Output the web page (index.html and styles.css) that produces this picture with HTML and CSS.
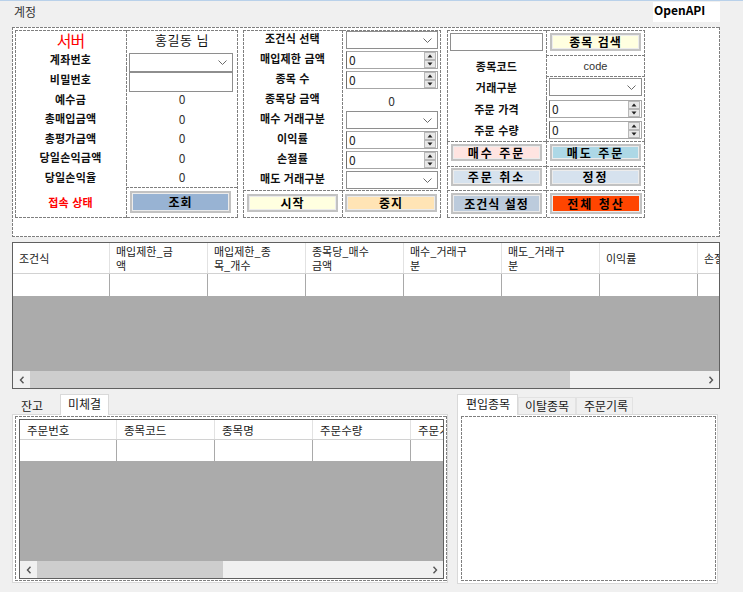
FILE: index.html
```html
<!DOCTYPE html>
<html lang="ko">
<head>
<meta charset="utf-8">
<title>OpenAPI</title>
<link rel="stylesheet" href="styles.css">
</head>
<body>
<div class="tabbar">
  <span class="tab-acct">계정</span>
  <span class="tab-api">OpenAPI</span>
</div>

<div class="top dbox">
  <!-- panel A -->
  <div class="pa dbox">
    <div class="lab server">서버</div>
    <div class="cell dl val name">홍길동 님</div>
    <div class="lab">계좌번호</div>
    <div class="cell dl a-ctl"><div class="combo wa"><svg class="chev" width="9" height="5" viewBox="0 0 9 5"><path d="M.5.5l4 4 4-4" fill="none" stroke="#6a6a6a"/></svg></div></div>
    <div class="lab">비밀번호</div>
    <div class="cell dl a-ctl"><div class="tbox wa"></div></div>
    <div class="lab">예수금</div><div class="cell dl val">0</div>
    <div class="lab">총매입금액</div><div class="cell dl val">0</div>
    <div class="lab">총평가금액</div><div class="cell dl val">0</div>
    <div class="lab">당일손익금액</div><div class="cell dl val">0</div>
    <div class="lab">당일손익율</div><div class="cell dl val">0</div>
    <div class="lab red">접속 상태</div>
    <div class="cell dlt bc"><button class="btn b-query">조회</button></div>
  </div>

  <!-- panel B -->
  <div class="pb dbox">
    <div class="lab">조건식 선택</div>
    <div class="cell dl pl4"><div class="combo wb"><svg class="chev" width="9" height="5" viewBox="0 0 9 5"><path d="M.5.5l4 4 4-4" fill="none" stroke="#6a6a6a"/></svg></div></div>
    <div class="lab">매입제한 금액</div>
    <div class="cell dl pl4"><div class="nud wb"><span>0</span><svg class="ud" width="12" height="16" viewBox="0 0 12 16"><rect x=".5" y=".5" width="11" height="7" fill="#e8e8e8" stroke="#b8b8b8"/><rect x=".5" y="8.5" width="11" height="7" fill="#e8e8e8" stroke="#b8b8b8"/><path d="M3.5 5.5h5L6 2.5z" fill="#222"/><path d="M3.5 10.5h5L6 13.5z" fill="#222"/></svg></div></div>
    <div class="lab">종목 수</div>
    <div class="cell dl pl4"><div class="nud wb"><span>0</span><svg class="ud" width="12" height="16" viewBox="0 0 12 16"><rect x=".5" y=".5" width="11" height="7" fill="#e8e8e8" stroke="#b8b8b8"/><rect x=".5" y="8.5" width="11" height="7" fill="#e8e8e8" stroke="#b8b8b8"/><path d="M3.5 5.5h5L6 2.5z" fill="#222"/><path d="M3.5 10.5h5L6 13.5z" fill="#222"/></svg></div></div>
    <div class="lab">종목당 금액</div>
    <div class="cell dl val">0</div>
    <div class="lab">매수 거래구분</div>
    <div class="cell dl pl4"><div class="combo wb"><svg class="chev" width="9" height="5" viewBox="0 0 9 5"><path d="M.5.5l4 4 4-4" fill="none" stroke="#6a6a6a"/></svg></div></div>
    <div class="lab">이익률</div>
    <div class="cell dl pl4"><div class="nud wb"><span>0</span><svg class="ud" width="12" height="16" viewBox="0 0 12 16"><rect x=".5" y=".5" width="11" height="7" fill="#e8e8e8" stroke="#b8b8b8"/><rect x=".5" y="8.5" width="11" height="7" fill="#e8e8e8" stroke="#b8b8b8"/><path d="M3.5 5.5h5L6 2.5z" fill="#222"/><path d="M3.5 10.5h5L6 13.5z" fill="#222"/></svg></div></div>
    <div class="lab">손절률</div>
    <div class="cell dl pl4"><div class="nud wb"><span>0</span><svg class="ud" width="12" height="16" viewBox="0 0 12 16"><rect x=".5" y=".5" width="11" height="7" fill="#e8e8e8" stroke="#b8b8b8"/><rect x=".5" y="8.5" width="11" height="7" fill="#e8e8e8" stroke="#b8b8b8"/><path d="M3.5 5.5h5L6 2.5z" fill="#222"/><path d="M3.5 10.5h5L6 13.5z" fill="#222"/></svg></div></div>
    <div class="lab">매도 거래구분</div>
    <div class="cell dl pl4"><div class="combo wb"><svg class="chev" width="9" height="5" viewBox="0 0 9 5"><path d="M.5.5l4 4 4-4" fill="none" stroke="#6a6a6a"/></svg></div></div>
    <div class="cell dt bb"><button class="btn b-start">시작</button></div>
    <div class="cell dlt bb2"><button class="btn b-stop">중지</button></div>
  </div>

  <!-- panel C -->
  <div class="pc dbox">
    <div class="cell c1"><div class="tbox wc"></div></div>
    <div class="cell dl c2"><button class="btn b-search">종목 검색</button></div>
    <div class="lab">종목코드</div>
    <div class="cell dlt val code">code</div>
    <div class="lab">거래구분</div>
    <div class="cell dlt pl3"><div class="combo wc"><svg class="chev" width="9" height="5" viewBox="0 0 9 5"><path d="M.5.5l4 4 4-4" fill="none" stroke="#6a6a6a"/></svg></div></div>
    <div class="lab">주문 가격</div>
    <div class="cell dl pl3"><div class="nud wc"><span>0</span><svg class="ud" width="12" height="16" viewBox="0 0 12 16"><rect x=".5" y=".5" width="11" height="7" fill="#e8e8e8" stroke="#b8b8b8"/><rect x=".5" y="8.5" width="11" height="7" fill="#e8e8e8" stroke="#b8b8b8"/><path d="M3.5 5.5h5L6 2.5z" fill="#222"/><path d="M3.5 10.5h5L6 13.5z" fill="#222"/></svg></div></div>
    <div class="lab">주문 수량</div>
    <div class="cell dl pl3"><div class="nud wc"><span>0</span><svg class="ud" width="12" height="16" viewBox="0 0 12 16"><rect x=".5" y=".5" width="11" height="7" fill="#e8e8e8" stroke="#b8b8b8"/><rect x=".5" y="8.5" width="11" height="7" fill="#e8e8e8" stroke="#b8b8b8"/><path d="M3.5 5.5h5L6 2.5z" fill="#222"/><path d="M3.5 10.5h5L6 13.5z" fill="#222"/></svg></div></div>
    <div class="cell dt r6"><button class="btn b-buy">매수 주문</button></div>
    <div class="cell dlt r6"><button class="btn b-sell">매도 주문</button></div>
    <div class="cell dt r7"><button class="btn b-cancel">주문 취소</button></div>
    <div class="cell dlt r7"><button class="btn b-cancel">정정</button></div>
    <div class="cell dt r8"><button class="btn b-cond">조건식 설정</button></div>
    <div class="cell dlt r8"><button class="btn b-clear">전체 청산</button></div>
  </div>
</div>

<div class="grid g1">
  <div class="ghead h1">
    <div class="gh">조건식</div>
    <div class="gh">매입제한_금<br>액</div>
    <div class="gh">매입제한_종<br>목_개수</div>
    <div class="gh">종목당_매수<br>금액</div>
    <div class="gh">매수_거래구<br>분</div>
    <div class="gh">매도_거래구<br>분</div>
    <div class="gh">이익률</div>
    <div class="gh">손절률</div>
  </div>
  <div class="grow r1">
    <div class="gc"></div><div class="gc"></div><div class="gc"></div><div class="gc"></div>
    <div class="gc"></div><div class="gc"></div><div class="gc"></div><div class="gc"></div>
  </div>
  <div class="gbody"></div>
  <div class="hscroll">
    <span class="arr"><svg width="6" height="8" viewBox="0 0 6 8"><path d="M4.5 .8L1.5 4l3 3.2" fill="none" stroke="#555" stroke-width="1.4"/></svg></span>
    <div class="track"><div class="thumb t1"></div></div>
    <span class="arr"><svg width="6" height="8" viewBox="0 0 6 8"><path d="M1.5 .8L4.5 4l-3 3.2" fill="none" stroke="#555" stroke-width="1.4"/></svg></span>
  </div>
</div>

<div class="lower">
  <div class="tabctl tl">
    <div class="tabs">
      <span class="tab t-jango">잔고</span>
      <span class="tab sel t-mi">미체결</span>
    </div>
    <div class="page pl">
      <div class="inner dbox il">
        <div class="grid g2">
          <div class="ghead h2">
            <div class="gh">주문번호</div>
            <div class="gh">종목코드</div>
            <div class="gh">종목명</div>
            <div class="gh">주문수량</div>
            <div class="gh">주문가격</div>
          </div>
          <div class="grow r2">
            <div class="gc"></div><div class="gc"></div><div class="gc"></div><div class="gc"></div><div class="gc"></div>
          </div>
          <div class="gbody"></div>
          <div class="hscroll">
            <span class="arr"><svg width="6" height="8" viewBox="0 0 6 8"><path d="M4.5 .8L1.5 4l3 3.2" fill="none" stroke="#555" stroke-width="1.4"/></svg></span>
            <div class="track"><div class="thumb t2"></div></div>
            <span class="arr"><svg width="6" height="8" viewBox="0 0 6 8"><path d="M1.5 .8L4.5 4l-3 3.2" fill="none" stroke="#555" stroke-width="1.4"/></svg></span>
          </div>
        </div>
      </div>
    </div>
  </div>

  <div class="tabctl tr">
    <div class="tabs">
      <span class="tab sel t-in">편입종목</span>
      <span class="tab t-out">이탈종목</span>
      <span class="tab t-log">주문기록</span>
    </div>
    <div class="page pr">
      <div class="inner dbox ir"></div>
    </div>
  </div>
</div>
</body>
</html>
```

FILE: styles.css
```css
:root {
  --dc: #7f7f7f;
  --dh: repeating-linear-gradient(90deg, var(--dc) 0 3px, transparent 3px 4px);
  --dv: repeating-linear-gradient(180deg, var(--dc) 0 3px, transparent 3px 4px);
}

* { box-sizing: border-box; }

html, body { margin: 0; padding: 0; }

body {
  width: 743px;
  height: 592px;
  overflow: hidden;
  background: #f0f0f0;
  font-family: "Noto Sans CJK KR", "Noto Sans", sans-serif;
  color: #000;
}

/* dashed helpers */
.dbox {
  background-image: var(--dh), var(--dh), var(--dv), var(--dv);
  background-size: 100% 1px, 100% 1px, 1px 100%, 1px 100%;
  background-position: 0 0, 0 100%, 0 0, 100% 0;
  background-repeat: no-repeat;
}
.dl {
  background-image: var(--dv);
  background-size: 1px 100%;
  background-position: 0 0;
  background-repeat: no-repeat;
}
.dt {
  background-image: var(--dh);
  background-size: 100% 1px;
  background-position: 0 0;
  background-repeat: no-repeat;
}
.dlt {
  background-image: var(--dv), var(--dh);
  background-size: 1px 100%, 100% 1px;
  background-position: 0 0, 0 0;
  background-repeat: no-repeat;
}

/* top strip */
.tabbar {
  height: 22px;
  border-top: 1px solid #b9d1ea;
  display: flex;
  justify-content: space-between;
  align-items: flex-start;
}
.tab-acct {
  font-size: 12px;
  line-height: 14px;
  margin: 4px 0 0 14px;
  color: #333;
}
.tab-api {
  width: 67px;
  height: 20px;
  margin: 1px 23px 0 0;
  padding-left: 1px;
  background: #fff;
  font-size: 12px;
  font-weight: 700;
  line-height: 16px;
}

/* top panel */
.top {
  margin: 5px 0 0 12px;
  width: 708px;
  height: 210px;
  background-color: #fff;
  padding: 3px 0 0 3px;
  display: flex;
  align-items: flex-start;
}
.pa {
  width: 223px;
  height: 188px;
  display: grid;
  grid-template-columns: 111px 112px;
  grid-template-rows: repeat(8, 19.6px) 1fr;
}
.pb {
  width: 198px;
  height: 188px;
  margin-left: 5px;
  display: grid;
  grid-template-columns: 99px 99px;
  grid-template-rows: repeat(8, 20px) 1fr;
}
.pc {
  width: 198px;
  height: 188px;
  margin-left: 6px;
  display: grid;
  grid-template-columns: 99px 99px;
  grid-template-rows: 25px 21px 22px 21px 22px 25px 24px 1fr;
}

.lab {
  display: flex;
  align-items: center;
  justify-content: center;
  font-size: 11px;
  font-weight: 700;
  letter-spacing: 0.2px;
  white-space: nowrap;
  color: #111;
}
.pb .lab { padding-bottom: 4px; }
.lab.server {
  font-size: 16px;
  font-weight: 400;
  letter-spacing: -1px;
  color: #ff0000;
}
.lab.red { color: #ff0000; }

.cell {
  display: flex;
  align-items: center;
  min-width: 0;
}
.val {
  justify-content: center;
  font-size: 12px;
  color: #333;
}
.val.name {
  font-size: 13px;
  letter-spacing: 0.5px;
  color: #111;
}
.val.code {
  font-family: "Liberation Sans", Arial, sans-serif;
  font-size: 11px;
  color: #333;
}
.a-ctl { align-items: flex-start; padding: 3px 0 0 3px; }
.pl4 { padding-left: 4px; }
.pl3 { padding-left: 3px; }
.bc { align-items: flex-start; padding: 4px 0 0 4px; }
.bb { align-items: flex-start; padding: 4px 0 0 4px; }
.bb2 { align-items: flex-start; padding: 4px 0 0 3px; }
.c1 { align-items: flex-start; padding: 3px 0 0 3px; }
.c2 { align-items: flex-start; padding: 3px 0 0 4px; }
.r6 { align-items: flex-start; padding: 3px 0 0 4px; }
.r7 { align-items: flex-start; padding: 2px 0 0 4px; }
.r8 { align-items: flex-start; padding: 3px 0 0 4px; }

/* inputs */
.combo {
  background: #fff;
  border: 1px solid #8e8e8e;
  display: flex;
  align-items: center;
  justify-content: flex-end;
  padding-right: 5px;
}
.tbox {
  background: #fff;
  border: 1px solid #8e8e8e;
}
.nud {
  background: #fff;
  border: 1px solid #a6a6a6;
  border-left-color: #6f6f6f;
  display: flex;
  align-items: center;
  padding: 0 1px 0 2px;
  font-size: 12px;
  color: #222;
}
.nud span { flex: 1; line-height: 14px; }
.ud { display: block; }
.chev { display: block; }

.combo.wa { width: 104px; height: 19px; }
.tbox.wa { width: 104px; height: 20px; }
.combo.wb, .nud.wb { width: 92px; height: 18px; }
.combo.wc, .nud.wc { width: 93px; height: 18px; }
.tbox.wc { width: 93px; height: 18px; }

/* buttons */
.btn {
  margin: 0;
  padding: 0;
  border: 2px solid #c2c2c2;
  box-shadow: inset 0 0 0 1px #ececec;
  font-family: "Noto Sans CJK KR", sans-serif;
  font-size: 12px;
  font-weight: 700;
  letter-spacing: 1px;
  color: #000;
  display: flex;
  align-items: center;
  justify-content: center;
  line-height: 1;
}
.b-query { width: 101px; height: 22px; background: #98b3d3; }
.b-start { width: 91px; height: 18px; background: #ffffe0; }
.b-stop { width: 92px; height: 18px; background: #ffe4b5; }
.b-search { width: 91px; height: 18px; background: #ffffe0; }
.b-buy { width: 91px; height: 17px; background: #ffe4e1; letter-spacing: 2px; }
.b-sell { width: 91px; height: 17px; background: #add8e6; letter-spacing: 2px; }
.b-cancel { width: 91px; height: 18px; background: #d6e2ee; letter-spacing: 2px; }
.b-cond { width: 91px; height: 21px; background: #bccbdc; }
.b-clear { width: 92px; height: 21px; background: #ff4500; letter-spacing: 2px; }

/* data grids */
.grid {
  border: 1px solid #606060;
  display: flex;
  flex-direction: column;
  overflow: hidden;
  background: #ababab;
}
.g1 {
  margin: 5px 0 0 12px;
  width: 708px;
  height: 147px;
}
.ghead, .grow {
  display: flex;
  background: #fff;
  flex-shrink: 0;
}
.h1 { height: 31px; border-bottom: 1px solid #d2d2d2; }
.r1 { height: 22px; }
.gh {
  width: 98px;
  flex-shrink: 0;
  border-right: 1px solid #e2e2e2;
  padding-left: 6px;
  display: flex;
  align-items: center;
  font-size: 11px;
  line-height: 14px;
  color: #1a1a1a;
  white-space: nowrap;
  overflow: hidden;
}
.h2 .gh { font-size: 11.5px; }
.gc {
  width: 98px;
  flex-shrink: 0;
  border-right: 1px solid #a9a9a9;
}
.gbody { flex: 1; background: #ababab; }
.hscroll {
  height: 17px;
  flex-shrink: 0;
  display: flex;
  background: #f0f0f0;
}
.arr {
  width: 17px;
  display: flex;
  align-items: center;
  justify-content: center;
  flex-shrink: 0;
}
.track { flex: 1; display: flex; }
.thumb { background: #cdcdcd; }
.t1 { width: 540px; }
.t2 { width: 186px; }

/* lower area */
.lower {
  display: flex;
  margin-top: 5px;
  align-items: flex-start;
}
.tabctl { display: flex; flex-direction: column; }
.tl { margin-left: 12px; width: 436px; }
.tr { margin-left: 9px; width: 261px; }
.tabs {
  height: 20px;
  display: flex;
  align-items: flex-end;
}
.tab {
  height: 17px;
  background: #f0f0f0;
  border: 1px solid #e2e2e2;
  border-bottom: none;
  font-size: 12px;
  line-height: 15px;
  color: #1a1a1a;
  white-space: nowrap;
}
.tab.sel {
  height: 21px;
  margin-bottom: -1px;
  background: #fff;
  border-color: #d9d9d9;
  position: relative;
  z-index: 1;
  line-height: 17px;
}
.t-jango { margin-left: 2px; width: 46px; padding-left: 6px; border-color: transparent; }
.t-mi { width: 49px; padding-left: 7px; }
.t-in { width: 61px; padding-left: 8px; }
.t-out { width: 58px; padding-left: 6px; }
.t-log { width: 57px; padding-left: 7px; }

.page {
  background: #fff;
  border: 1px solid #d9d9d9;
}
.pl { height: 169px; padding: 1px 0 1px 2px; }
.pr { height: 170px; padding: 1px 1px 2px 3px; }
.inner { height: 100%; }
.il { padding: 3px 0 0 4px; }
.g2 { width: 425px; height: 160px; }
.h2 { height: 20px; border-bottom: 1px solid #d2d2d2; }
.h2 .gh { padding-left: 7px; }
.r2 { height: 21px; }
.g2 .gh:first-child, .g2 .gc:first-child { width: 97px; }
.g1 .gh:first-child, .g1 .gc:first-child { width: 97px; }
```
